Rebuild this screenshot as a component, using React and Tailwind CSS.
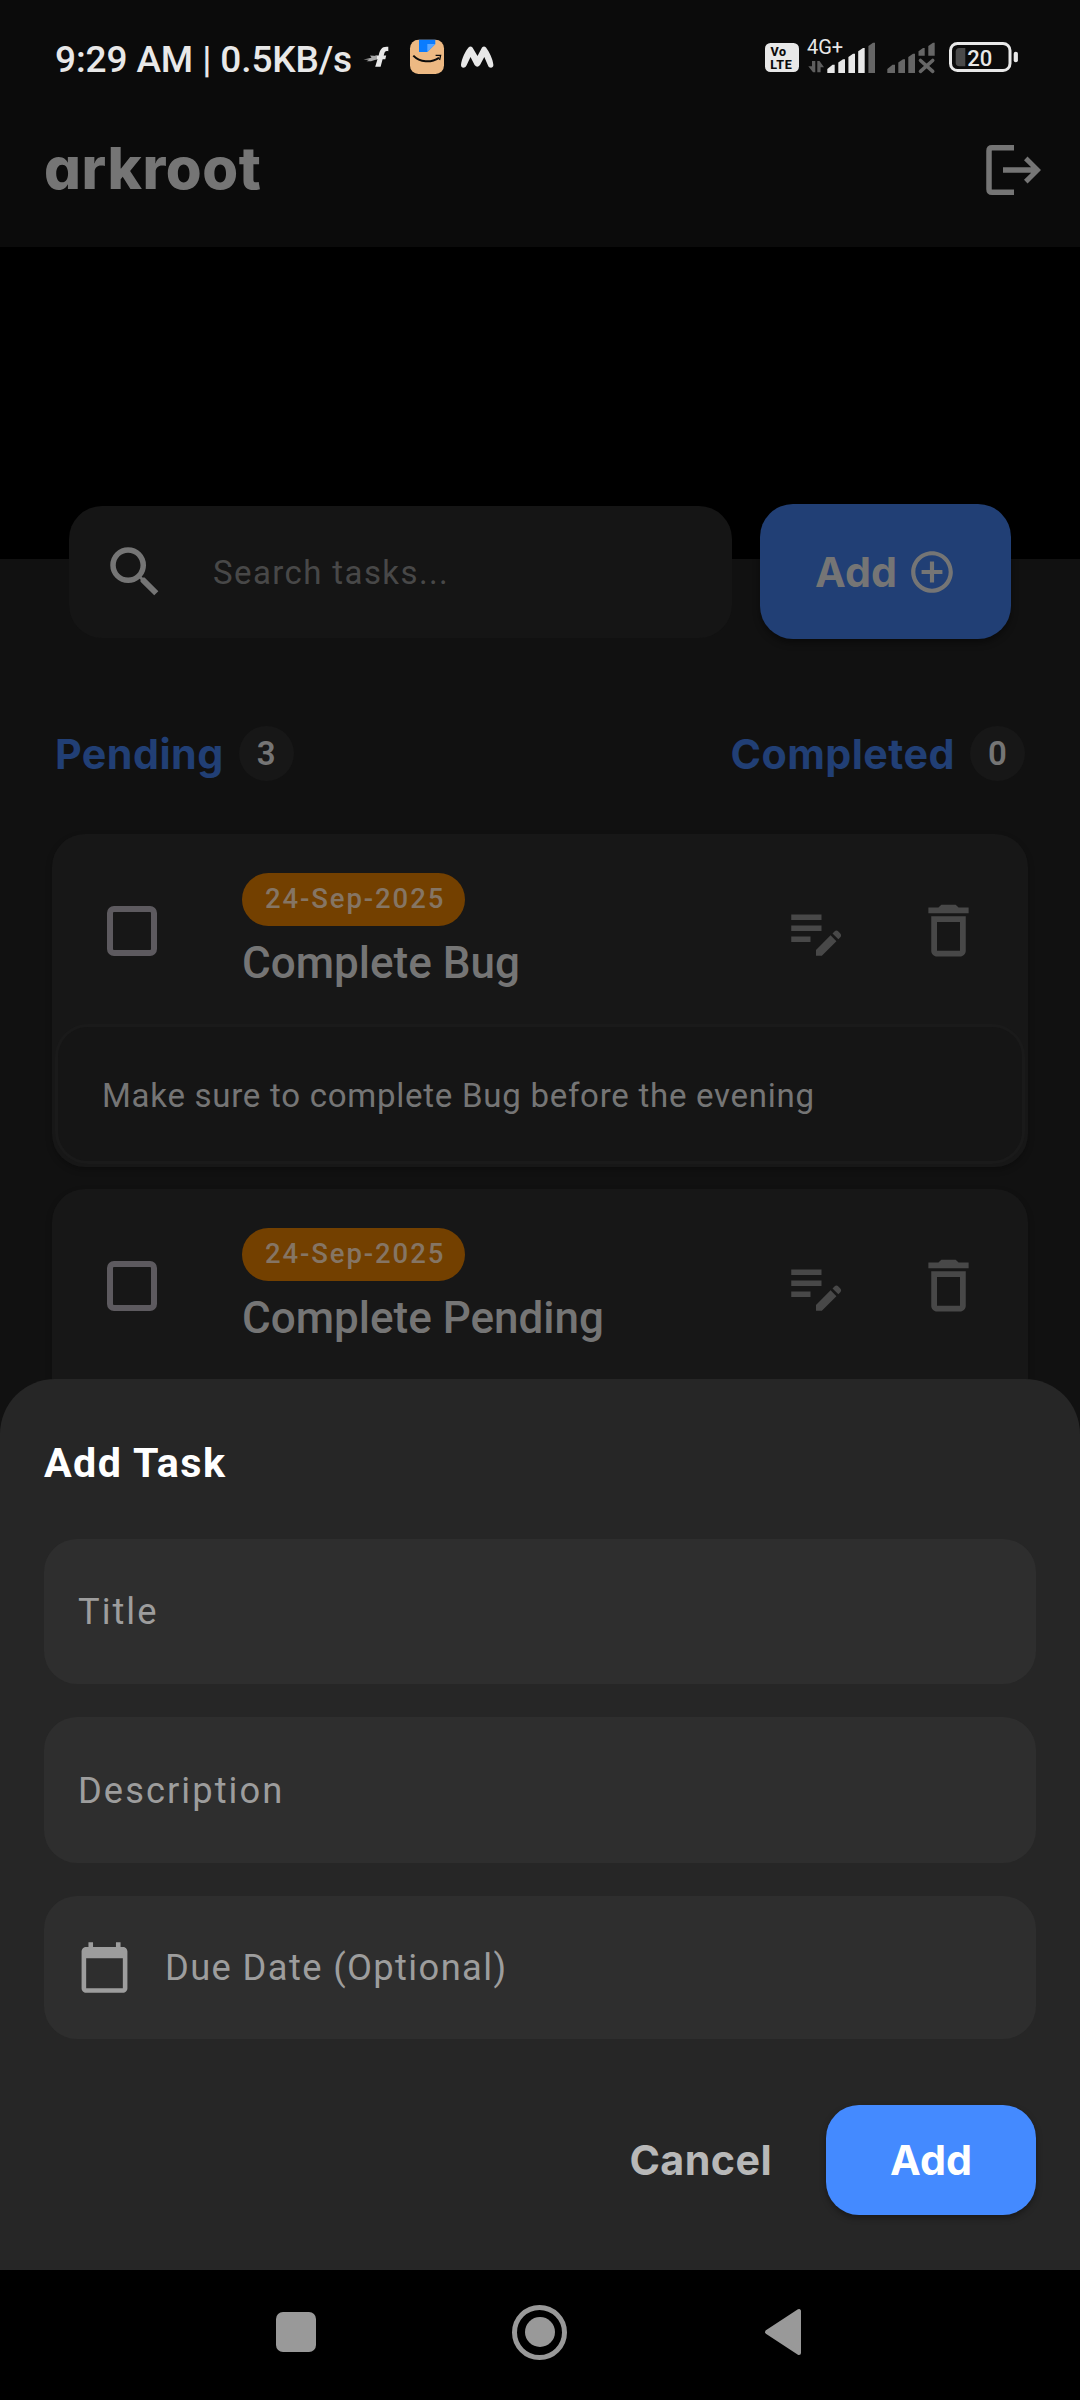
import { MdSearch, MdAddCircleOutline, MdEditNote, MdDeleteOutline, MdCalendarToday } from "react-icons/md";

const TASKS = [
  { date: "24-Sep-2025", title: "Complete Bug", note: "Make sure to complete Bug before the evening" },
  { date: "24-Sep-2025", title: "Complete Pending", note: "" },
];

function NotificationIcons() {
  return (
    <svg width="134" height="42" viewBox="0 0 134 42" fill="none" className="ml-[10px] shrink-0">
      <path
        d="M26.300 8.800V13.200C23.500 12.600 22.800 13.600 22.300 15.500L21.700 17.600H24.200L23.300 21.300H20.600L18.600 28.700H13.200L15.500 21.300H12L13.500 17.600H16.700C17.700 11.500 20 8 26.300 8.800Z"
        fill="#e8e8e8"
      />
      <path d="M8 17.600L15 18V21.300L9 23.300H4.500L7 21.800L1.500 21.400L9.500 19.800Z" fill="#a8a8a8" />
      <rect x="48" y="1.700" width="34" height="34.300" rx="8.500" fill="#edb983" />
      <path d="M57 1.700H73.300V6L65.300 14H57Z" fill="#0a7cff" />
      <path d="M65.300 6H73.300L65.300 14Z" fill="#5ba7ff" />
      <path d="M51.300 17.600C58 24.600 69 25 77 19.800" stroke="#0b0b0b" strokeWidth="2" />
      <path d="M73.600 17.300H78.600L77.600 22" stroke="#0b0b0b" strokeWidth="1.300" />
      <path
        d="M99 27C99.500 21 103.500 13 106.500 9.500Q108.500 7.500 110.500 9.500L115.500 18L120 9.500Q122 7.500 124 9.500C127 13.500 131 21 131.400 27C131.400 30.500 127 30.500 126 27.500L122.300 19L118 27Q115.300 30.500 112.600 27L108.500 19L104.500 27.500C103 30.500 99 30.500 99 27Z"
        fill="#e8e8e8"
      />
    </svg>
  );
}

function SystemIcons() {
  return (
    <svg width="255" height="58" viewBox="0 -8 255 58" fill="none" className="shrink-0 font-[Roboto,sans-serif]">
      <rect x="0" y="5" width="34" height="29" rx="5.500" fill="#e8e8e8" />
      <text x="5.500" y="17.700" fontSize="12.500" fontWeight="800" letterSpacing="0.600" fill="#0b0b0b">Vo</text>
      <text x="5.300" y="30.500" fontSize="12.500" fontWeight="800" letterSpacing="0.600" fill="#0b0b0b">LTE</text>
      <text x="42" y="16" fontSize="20" fill="#e8e8e8">4G+</text>
      <path d="M47 23H50.300V34.300H48L43.300 28.300H47Z M55.600 34.300H52.300V23H54.500L59 29.300H55.600Z" fill="#5e5e5e" />
      <g fill="#e8e8e8">
        <path d="M62.300 35V31L67.500 26.700H69.700V35Z" />
        <path d="M73.300 35V24.500L78 21.300H80V35Z" />
        <path d="M83.400 35V19L88 15.700H90V35Z" />
        <path d="M93.200 35V13.300L98 10H99.700V35Z" />
      </g>
      <g fill="#666666">
        <path d="M103.400 35V8L108 4.700H110V35Z" />
        <path d="M122.300 35V31L127.500 26.700H130V35Z" />
        <path d="M133.300 35V24.500L138 21.300H140V35Z" />
        <path d="M143.300 35V19L148 15.700H150V35Z" />
        <path d="M153.500 17.700V13.300L158 10H159.700V17.700Z" />
        <path d="M163.300 17.700V8L168 4.700H169.700V17.700Z" />
      </g>
      <path d="M155.500 22.500L167.700 33.300M167.700 22.500L155.500 33.300" stroke="#666666" strokeWidth="3.600" strokeLinecap="round" />
      <rect x="185.500" y="5.500" width="59.500" height="27" rx="7" stroke="#e8e8e8" strokeWidth="3" />
      <path d="M200.300 10V28.300H194.500Q190.700 28.300 190.700 24.500V13.800Q190.700 10 194.500 10Z" fill="#4a4a4a" />
      <rect x="248.700" y="13.800" width="4.200" height="10.500" rx="2" fill="#e8e8e8" />
      <text x="202.200" y="27.700" fontSize="22" fontWeight="500" fill="#e8e8e8">20</text>
    </svg>
  );
}

function StatusBar() {
  return (
    <div className="flex h-[118px] items-center pl-[55px] pr-[60px]">
      <span className="w-[297px] pt-[2px] text-[37px] font-medium tracking-[-0.12px] whitespace-nowrap text-[#e8e8e8]">9:29 AM | 0.5KB/s</span>
      <NotificationIcons />
      <div className="ml-auto flex">
        <SystemIcons />
      </div>
    </div>
  );
}

function AppBar() {
  return (
    <div className="flex h-[129px] items-center justify-between pr-[39px] pb-[25px] pl-[44px]">
      <span className="-mt-[4px] font-[Inter,sans-serif] text-[58px] leading-none font-extrabold tracking-[0.6px] text-[#757575] [font-feature-settings:'cv11']">
        arkroot
      </span>
      <svg width="55" height="50" viewBox="0 0 55 50" fill="none">
        <path d="M28 2.800H6Q3 2.800 3 5.800V44.200Q3 47.200 6 47.200H28" stroke="#757575" strokeWidth="5.500" />
        <path d="M17 22.300H45.200L38 15.300L41.500 11.500L55 25L41.500 38.500L38 34.700L45.200 27.700H17Z" fill="#757575" />
      </svg>
    </div>
  );
}

function Counter({ label, count }) {
  return (
    <div className="flex items-center gap-[15px]">
      <span className="pt-[2px] font-[Inter,sans-serif] text-[41.25px] leading-[55px] font-bold tracking-[0.45px] text-[#213f75]">{label}</span>
      <span className="flex size-[55px] items-center justify-center rounded-full bg-[#171717] text-[33px] leading-none font-semibold text-[#757575]">
        {count}
      </span>
    </div>
  );
}

function TaskCard({ task }) {
  return (
    <div className="mx-[52px] h-[333px] rounded-[33px] bg-[#171717] shadow-[0_3px_6px_rgba(0,0,0,0.25)]">
      <div className="flex h-[190px] items-start pt-[38px] pr-[45px] pl-[55px]">
        <div className="flex h-[117px] w-full items-center">
          <div className="size-[50px] rounded-[7px] border-[6px] border-[#5d5a5f]" />
          <div className="ml-[85px] flex flex-col items-start">
            <span className="flex h-[53px] items-center rounded-full bg-[#734000] pr-[20px] pl-[23px] text-[27.5px] font-medium tracking-[1.9px] text-[#857564]">
              {task.date}
            </span>
            <span className="mt-[11px] text-[44px] leading-[52px] font-medium text-[#757575]">{task.title}</span>
          </div>
          <div className="ml-auto flex items-center gap-[65px] text-[#484848]">
            <MdEditNote className="size-[66px]" />
            <MdDeleteOutline className="size-[69px]" />
          </div>
        </div>
      </div>
      <div className="mx-[3px] flex h-[140px] items-center rounded-[33px] border-[3px] border-[#1a1a1a] bg-[#151515] pt-[4px] pl-[44px]">
        <span className="text-[33px] tracking-[0.74px] whitespace-nowrap text-[#757575]">{task.note}</span>
      </div>
    </div>
  );
}

function AddTaskSheet() {
  return (
    <div className="absolute inset-x-0 bottom-[130px] h-[891px] rounded-t-[55px] bg-[#262626] px-[44px]">
      <h2 className="pt-[59px] text-[41.25px] leading-[50px] font-bold tracking-[1.4px] text-white">Add Task</h2>
      <div className="mt-[51px] flex flex-col gap-[33px] text-[36.3px] text-[#9d9d9d]">
        <div className="flex h-[145px] items-center rounded-[33px] bg-[#2e2e2e] pt-[2px] pl-[34px] tracking-[2px]">Title</div>
        <div className="flex h-[146px] items-center rounded-[33px] bg-[#2e2e2e] pt-[2px] pl-[34px] tracking-[2.05px]">Description</div>
        <div className="flex h-[143px] items-center gap-[33px] rounded-[33px] bg-[#2e2e2e] pl-[33px] tracking-[1.38px]">
          <MdCalendarToday className="size-[55px]" />
          <span className="pt-[2px]">Due Date (Optional)</span>
        </div>
      </div>
      <div className="mt-[66px] flex items-center justify-end gap-[54px] font-[Inter,sans-serif] text-[41.25px] font-bold">
        <button className="pt-[2px] tracking-[0.4px] text-[#b8b8b8]">Cancel</button>
        <button className="h-[110px] w-[210px] rounded-[33px] bg-[#448aff] pt-[2px] text-white shadow-[0_3px_6px_rgba(0,0,0,0.35)]">Add</button>
      </div>
    </div>
  );
}

function NavBar() {
  return (
    <div className="absolute inset-x-0 bottom-0 flex h-[130px] items-center bg-black pb-[6px] pl-[276px]">
      <div className="size-[40px] rounded-[7px] bg-[#999999]" />
      <div className="ml-[196px] flex size-[55px] items-center justify-center rounded-full border-[5px] border-[#999999]">
        <div className="size-[30px] rounded-full bg-[#999999]" />
      </div>
      <svg width="38" height="48" viewBox="0 0 38 48" className="ml-[197px]">
        <path d="M3 24L35 3V45Z" fill="#999999" stroke="#999999" strokeWidth="4" strokeLinejoin="round" />
      </svg>
    </div>
  );
}

export default function App() {
  return (
    <div className="relative h-[2400px] w-[1080px] overflow-hidden bg-[#111111] font-[Roboto,sans-serif]">
      <header className="bg-[#0b0b0b]">
        <StatusBar />
        <AppBar />
      </header>
      <div className="h-[312px] bg-black" />
      <div className="-mt-[55px] flex h-[135px] items-center gap-[28px] px-[69px]">
        <div className="flex h-[132px] w-[663px] items-center rounded-[33px] bg-[#151515] pl-[33px] text-[#757575]">
          <MdSearch className="size-[66px]" />
          <span className="ml-[45px] pt-[2px] text-[33px] tracking-[1.4px] text-[#484848]">Search tasks...</span>
        </div>
        <div className="flex h-[135px] w-[251px] items-center justify-center gap-[10px] rounded-[33px] bg-[#213f75] pt-px pl-[1px] text-[#757575] shadow-[0_4px_7px_rgba(0,0,0,0.4)]">
          <span className="pt-px font-[Inter,sans-serif] text-[41.25px] font-bold">Add</span>
          <MdAddCircleOutline className="size-[50px]" />
        </div>
      </div>
      <div className="mt-[87px] flex h-[55px] items-center justify-between px-[55px]">
        <Counter label="Pending" count={3} />
        <Counter label="Completed" count={0} />
      </div>
      <div className="mt-[53px] flex flex-col gap-[22px]">
        {TASKS.map((task) => (
          <TaskCard key={task.title} task={task} />
        ))}
      </div>
      <AddTaskSheet />
      <NavBar />
    </div>
  );
}
